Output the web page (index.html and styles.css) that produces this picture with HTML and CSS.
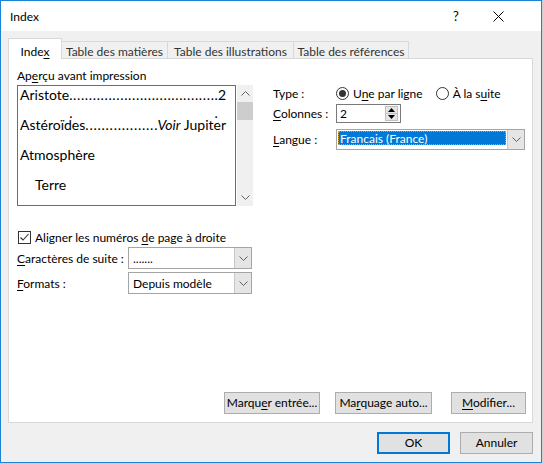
FILE: index.html
```html
<!DOCTYPE html>
<html lang="fr">
<head>
<meta charset="utf-8">
<title>Index</title>
<link rel="stylesheet" href="styles.css">
</head>
<body>
<div class="window">
  <div class="titlebar">
    <span class="title">Index</span>
    <span class="help">?</span>
    <svg class="close" width="11" height="11" viewBox="0 0 11 11"><path d="M0.5 0.5 L10.5 10.5 M10.5 0.5 L0.5 10.5" stroke="#000" stroke-width="1" fill="none"/></svg>
  </div>
  <div class="body">
    <div class="tabs">
      <div class="tab active">Inde<u>x</u></div>
      <div class="tab t1">Table des matières</div>
      <div class="tab t2">Table des illustrations</div>
      <div class="tab t3">Table des références</div>
    </div>
    <div class="panel">
      <div class="cols">
        <div class="col-left">
          <div class="preview-label">Ap<u>e</u>rçu avant impression</div>
          <div class="preview-row">
            <div class="preview">
              <div class="entry"><span>Aristote</span><span class="leader">. . . . . . . . . . . . . . . . . . . . . . . . . . . . . . . . . . . . . . . .</span><span>2</span></div>
              <div class="entry"><span>Astéroïdes</span><span class="leader">. . . . . . . . . . . . . . . . . .</span><span><i>Voir</i> Jupiter</span></div>
              <div class="entry"><span>Atmosphère</span></div>
              <div class="entry sub"><span>Terre</span></div>
            </div>
            <div class="vscroll">
              <svg class="arrow" width="9" height="5" viewBox="0 0 9 5"><path d="M0.5 4.5 L4.5 0.5 L8.5 4.5" stroke="#606060" fill="none"/></svg>
              <div class="thumb"></div>
              <div class="track"></div>
              <svg class="arrow" width="9" height="5" viewBox="0 0 9 5"><path d="M0.5 0.5 L4.5 4.5 L8.5 0.5" stroke="#606060" fill="none"/></svg>
            </div>
          </div>
          <div class="check-row">
            <span class="checkbox"><svg width="11" height="11" viewBox="0 0 11 11"><path d="M1.5 5.5 L4 8 L9.5 2" stroke="#333" stroke-width="1.1" fill="none"/></svg></span>
            <span>Aligner les numéros <u>d</u>e page à droite</span>
          </div>
          <div class="field-row r-suite">
            <span class="flabel"><u>C</u>aractères de suite :</span>
            <div class="combo wide">
              <span class="combo-text">.......</span>
              <span class="combo-btn"><svg width="9" height="5" viewBox="0 0 9 5"><path d="M0.5 0.5 L4.5 4.5 L8.5 0.5" stroke="#606060" fill="none"/></svg></span>
            </div>
          </div>
          <div class="field-row r-formats">
            <span class="flabel"><u>F</u>ormats :</span>
            <div class="combo wide">
              <span class="combo-text">Depuis modèle</span>
              <span class="combo-btn"><svg width="9" height="5" viewBox="0 0 9 5"><path d="M0.5 0.5 L4.5 4.5 L8.5 0.5" stroke="#606060" fill="none"/></svg></span>
            </div>
          </div>
        </div>
        <div class="col-right">
          <div class="rrow r-type">
            <span class="rlabel">Type :</span>
            <span class="radio on"></span><span class="rtext">U<u>n</u>e par ligne</span>
            <span class="radio"></span><span class="rtext">À la s<u>u</u>ite</span>
          </div>
          <div class="rrow r-cols">
            <span class="rlabel"><u>C</u>olonnes :</span>
            <div class="spin">
              <span class="spin-text">2</span>
              <span class="spin-btns">
                <span class="sbtn"><svg width="7" height="4" viewBox="0 0 7 4"><path d="M0 4 L3.5 0 L7 4 Z" fill="#000"/></svg></span>
                <span class="sbtn"><svg width="7" height="4" viewBox="0 0 7 4"><path d="M0 0 L3.5 4 L7 0 Z" fill="#000"/></svg></span>
              </span>
            </div>
          </div>
          <div class="rrow r-lang">
            <span class="rlabel"><u>L</u>angue :</span>
            <div class="combo lang">
              <span class="combo-text sel">Francais (France)</span>
              <span class="combo-btn"><svg width="9" height="5" viewBox="0 0 9 5"><path d="M0.5 0.5 L4.5 4.5 L8.5 0.5" stroke="#606060" fill="none"/></svg></span>
            </div>
          </div>
        </div>
      </div>
      <div class="panel-buttons">
        <button class="btn b-mark">Marqu<u>e</u>r entrée...</button>
        <button class="btn b-auto">Ma<u>r</u>quage auto...</button>
        <button class="btn b-mod"><u>M</u>odifier...</button>
      </div>
    </div>
    <div class="footer">
      <button class="btn ok">OK</button>
      <button class="btn">Annuler</button>
    </div>
  </div>
</div>
</body>
</html>
```
FILE: styles.css
```css
* { box-sizing: border-box; }
html, body { margin: 0; padding: 0; }
body {
  width: 543px; height: 464px; overflow: hidden;
  background: #cfcfcf;
  font-family: Lato, "Noto Sans", sans-serif;
  font-size: 12px; color: #000;
}
u { text-decoration: underline; text-underline-offset: 2px; text-decoration-thickness: 1px; }

.window {
  width: 542px; height: 463px;
  border: 1px solid #1883d7;
  background: #f0f0f0;
  display: flex; flex-direction: column;
}
.titlebar {
  height: 30px; flex: none; background: #fff;
  display: flex; align-items: center;
  padding-left: 9px; padding-right: 37px;
}
.title { flex: 1; }
.help { width: 12px; text-align: center; margin-right: 31px; font-size: 13px; }
.close { display: block; }

.body { flex: 1; padding: 7px 8px 0 7px; display: flex; flex-direction: column; }

.tabs { height: 21px; display: flex; align-items: flex-start; margin-bottom: -1px; position: relative; z-index: 1; }
.tab {
  border: 1px solid #d9d9d9; border-bottom: none;
  text-align: center; line-height: 16px; color: #333;
  white-space: nowrap;
}
.tab.active { width: 54px; height: 21px; background: #fff; padding-top: 5px; color: #000; }
.tab.t1, .tab.t2, .tab.t3 { margin-top: 3px; height: 17px; padding-top: 2px; margin-left: -1px; background: #f0f0f0; }
.tab.t1 { width: 107px; }
.tab.t2 { width: 127px; }
.tab.t3 { width: 116px; }

.panel {
  width: 525px; height: 365px; flex: none;
  background: #fff; border: 1px solid #d9d9d9;
  padding: 9px 6px 8px 8px;
  display: flex; flex-direction: column;
}
.cols { display: grid; grid-template-columns: 236px 254px; column-gap: 19px; }

.preview-label { line-height: 16px; margin-bottom: 1px; }
.preview-row { display: flex; height: 121px; }
.preview {
  width: 219px; border: 1px solid #6e6e6e;
  padding: 0 9px 0 2px;
  font-size: 14px;
}
.entry { display: flex; line-height: 18px; height: 18px; margin-bottom: 12px; white-space: nowrap; }
.entry.sub { padding-left: 15px; }
.leader {
  flex: 1; min-width: 0;
  white-space: normal; word-spacing: -3px;
  text-align: justify; text-align-last: justify;
}
.vscroll {
  width: 16px; margin-left: 1px; background: #f0f0f0;
  display: flex; flex-direction: column; align-items: center;
  padding-top: 6px; padding-bottom: 6px;
}
.arrow { display: block; flex: none; }
.thumb { width: 16px; height: 18px; background: #cdcdcd; margin-top: 6px; }
.track { flex: 1; }

.check-row { display: flex; align-items: center; height: 16px; margin-top: 23px; padding-left: 1px; }
.checkbox {
  width: 13px; height: 13px; border: 1px solid #333; background: #fff;
  display: flex; align-items: center; justify-content: center; margin-right: 4px;
}
.checkbox svg { display: block; }

.field-row { display: flex; align-items: center; }
.r-suite { margin-top: 2px; }
.r-formats { margin-top: 3px; }
.flabel { width: 111px; }
.combo {
  display: flex; align-items: stretch;
  border: 1px solid #a5a5a5; background: #fff;
}
.combo.wide { width: 124px; height: 22px; }
.combo-text { flex: 1; padding-left: 4px; display: flex; align-items: center; white-space: nowrap; }
.combo-btn {
  width: 17px; background: #e5e5e5; border-left: 1px solid #c8c8c8;
  display: flex; align-items: center; justify-content: center;
}
.combo-btn svg { display: block; }

.col-right { padding-top: 17px; }
.rrow { display: flex; align-items: center; }
.rlabel { width: 64px; padding-left: 1px; }
.r-type { height: 16px; }
.r-cols { margin-top: 3px; height: 19px; }
.r-lang { margin-top: 6px; height: 21px; }
.radio {
  width: 13px; height: 13px; border: 1px solid #333; border-radius: 50%;
  background: #fff; display: flex; align-items: center; justify-content: center;
  margin-right: 4px;
}
.radio.on::after { content: ""; width: 7px; height: 7px; border-radius: 50%; background: #333; }
.rtext { margin-right: 13px; }

.spin {
  width: 65px; height: 19px; border: 1px solid #7a7a7a; background: #fff;
  display: flex; padding: 1px 2px 1px 3px;
}
.spin-text { flex: 1; line-height: 15px; }
.spin-btns { width: 13px; display: flex; flex-direction: column; }
.sbtn {
  flex: 1; background: #e5e5e5; border: 1px solid #c0c0c0;
  display: flex; align-items: center; justify-content: center;
}
.sbtn + .sbtn { border-top: none; }
.sbtn svg { display: block; }

.combo.lang { width: 189px; height: 21px; }
.combo-text.sel {
  margin: 1px 1px 4px 1px; padding-left: 2px;
  background: #0078d7; color: #fff; outline: 1px dotted #d9a040; outline-offset: -1px;
}

.panel-buttons { margin-top: auto; display: flex; justify-content: flex-end; }
.btn {
  font: inherit; color: #000;
  height: 22px; background: #e1e1e1; border: 1px solid #adadad;
  padding: 0; line-height: 18px;
}
.b-mark { width: 96px; }
.b-auto { width: 97px; margin-left: 15px; }
.b-mod { width: 75px; margin-left: 19px; }

.footer { display: flex; justify-content: flex-end; margin-top: 9px; }
.footer .btn { width: 73px; margin-left: 10px; }
.footer .btn.ok { border: 2px solid #0078d7; }
```
